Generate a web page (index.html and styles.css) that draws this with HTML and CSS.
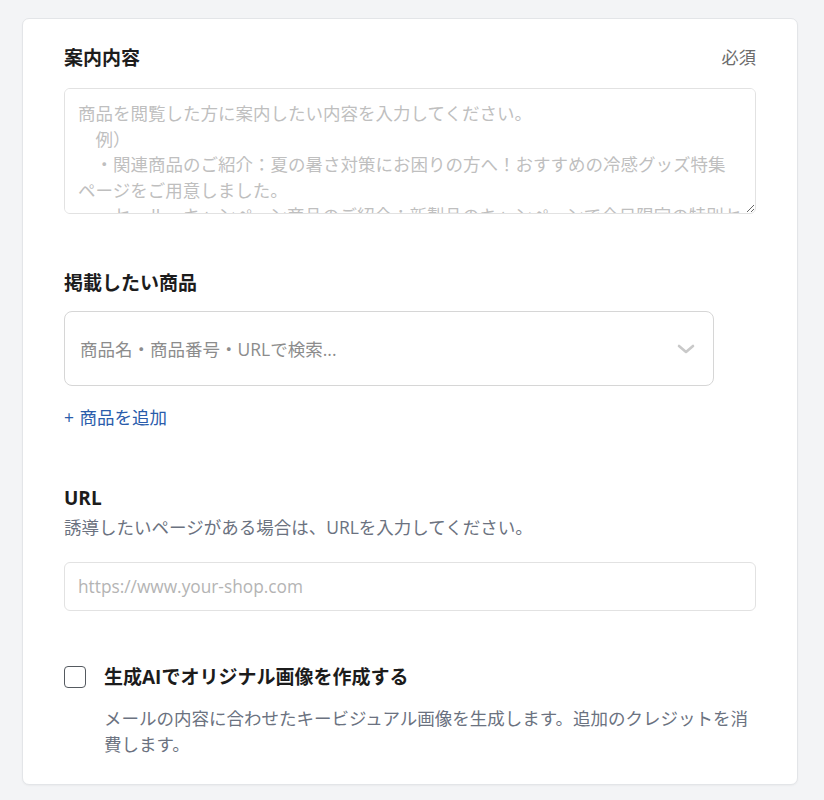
FILE: index.html
```html
<!DOCTYPE html>
<html lang="ja">
<head>
<meta charset="utf-8">
<title>案内内容</title>
<link rel="stylesheet" href="styles.css">
</head>
<body>
<div class="card">
  <section class="section">
    <div class="field-head">
      <span class="label">案内内容</span>
      <span class="required">必須</span>
    </div>
    <textarea class="textarea" placeholder="商品を閲覧した方に案内したい内容を入力してください。&#10;　例）&#10;　・関連商品のご紹介：夏の暑さ対策にお困りの方へ！おすすめの冷感グッズ特集&#10;ページをご用意しました。&#10;　・セール・キャンペーン商品のご紹介：新製品のキャンペーンで今日限定の特別セールを実施中です。"></textarea>
  </section>

  <section class="section section-products">
    <div class="label">掲載したい商品</div>
    <div class="select">
      <span class="select-placeholder">商品名・商品番号・URLで検索...</span>
      <svg class="chevron" width="18" height="10" viewBox="0 0 18 10" aria-hidden="true">
        <path d="M2 2 L9 8 L16 2" fill="none" stroke="#c9c9c9" stroke-width="2.6" stroke-linecap="round" stroke-linejoin="round"/>
      </svg>
    </div>
    <a class="add-link" href="#">+ 商品を追加</a>
  </section>

  <section class="section section-url">
    <div class="label">URL</div>
    <p class="help">誘導したいページがある場合は、URLを入力してください。</p>
    <input class="input" type="text" placeholder="https://www.your-shop.com">
  </section>

  <section class="section section-ai">
    <label class="check-row">
      <input class="checkbox" type="checkbox">
      <span class="label">生成AIでオリジナル画像を作成する</span>
    </label>
    <p class="help check-help">メールの内容に合わせたキービジュアル画像を生成します。追加のクレジットを消費します。</p>
  </section>
</div>
</body>
</html>
```

FILE: styles.css
```css
html, body {
  margin: 0;
  padding: 0;
}

body {
  background: #f3f4f6;
  font-family: "Open Sans", "Noto Sans CJK JP", sans-serif;
  color: #1c1c1c;
}

.card {
  margin: 18px 0 16px 22px;
  width: 776px;
  box-sizing: border-box;
  background: #ffffff;
  border: 1px solid #e3e5e8;
  border-radius: 7px;
  box-shadow: 0 1px 2px rgba(0, 0, 0, 0.04);
  padding: 26px 41px 27px;
  display: flex;
  flex-direction: column;
}

.section {
  display: flex;
  flex-direction: column;
}

.section-products {
  margin-top: 56px;
}

.section-url {
  margin-top: 55px;
}

.section-ai {
  margin-top: 53px;
}

.field-head {
  display: flex;
  justify-content: space-between;
  align-items: center;
}

.label {
  font-size: 19px;
  font-weight: 700;
  line-height: 26px;
  color: #1c1c1c;
}

.required {
  font-size: 17.2px;
  line-height: 26px;
  color: #6b6b6b;
}

.textarea {
  display: block;
  margin: 17px 0 0;
  width: 100%;
  height: 126px;
  box-sizing: border-box;
  border: 1px solid #e2e2e2;
  border-radius: 6px;
  padding: 12px 13px;
  font-family: inherit;
  font-size: 17.5px;
  line-height: 25.5px;
  color: #1c1c1c;
  resize: vertical;
  outline: none;
  background: #fff;
}

.textarea::placeholder {
  color: #bfbfbf;
}

.select {
  margin-top: 15px;
  width: 650px;
  height: 75px;
  box-sizing: border-box;
  border: 1px solid #d6d6d6;
  border-radius: 8px;
  padding: 0 18px 0 15px;
  display: flex;
  align-items: center;
  justify-content: space-between;
}

.select-placeholder {
  font-size: 17.5px;
  line-height: 26px;
  color: #8c8c8c;
}

.chevron {
  display: block;
}

.add-link {
  margin-top: 18px;
  align-self: flex-start;
  font-size: 17.5px;
  line-height: 26px;
  word-spacing: 1px;
  color: #2a5cab;
  text-decoration: none;
}

.help {
  margin: 3px 0 0;
  font-size: 17.5px;
  line-height: 26px;
  color: #6b7280;
}

.input {
  margin: 22px 0 0;
  width: 100%;
  height: 49px;
  box-sizing: border-box;
  border: 1px solid #e2e2e2;
  border-radius: 6px;
  padding: 0 13px;
  font-family: inherit;
  font-size: 17.3px;
  color: #1c1c1c;
  outline: none;
  background: #fff;
}

.input::placeholder {
  color: #b4b4b4;
}

.check-row {
  display: flex;
  align-items: center;
  gap: 18px;
  cursor: pointer;
}

.checkbox {
  appearance: none;
  -webkit-appearance: none;
  margin: 0;
  width: 22px;
  height: 22px;
  box-sizing: border-box;
  border: 1.6px solid #555a60;
  border-radius: 4px;
  background: #fff;
  flex: none;
}

.check-help {
  margin-top: 15px;
  padding-left: 40px;
}
```
